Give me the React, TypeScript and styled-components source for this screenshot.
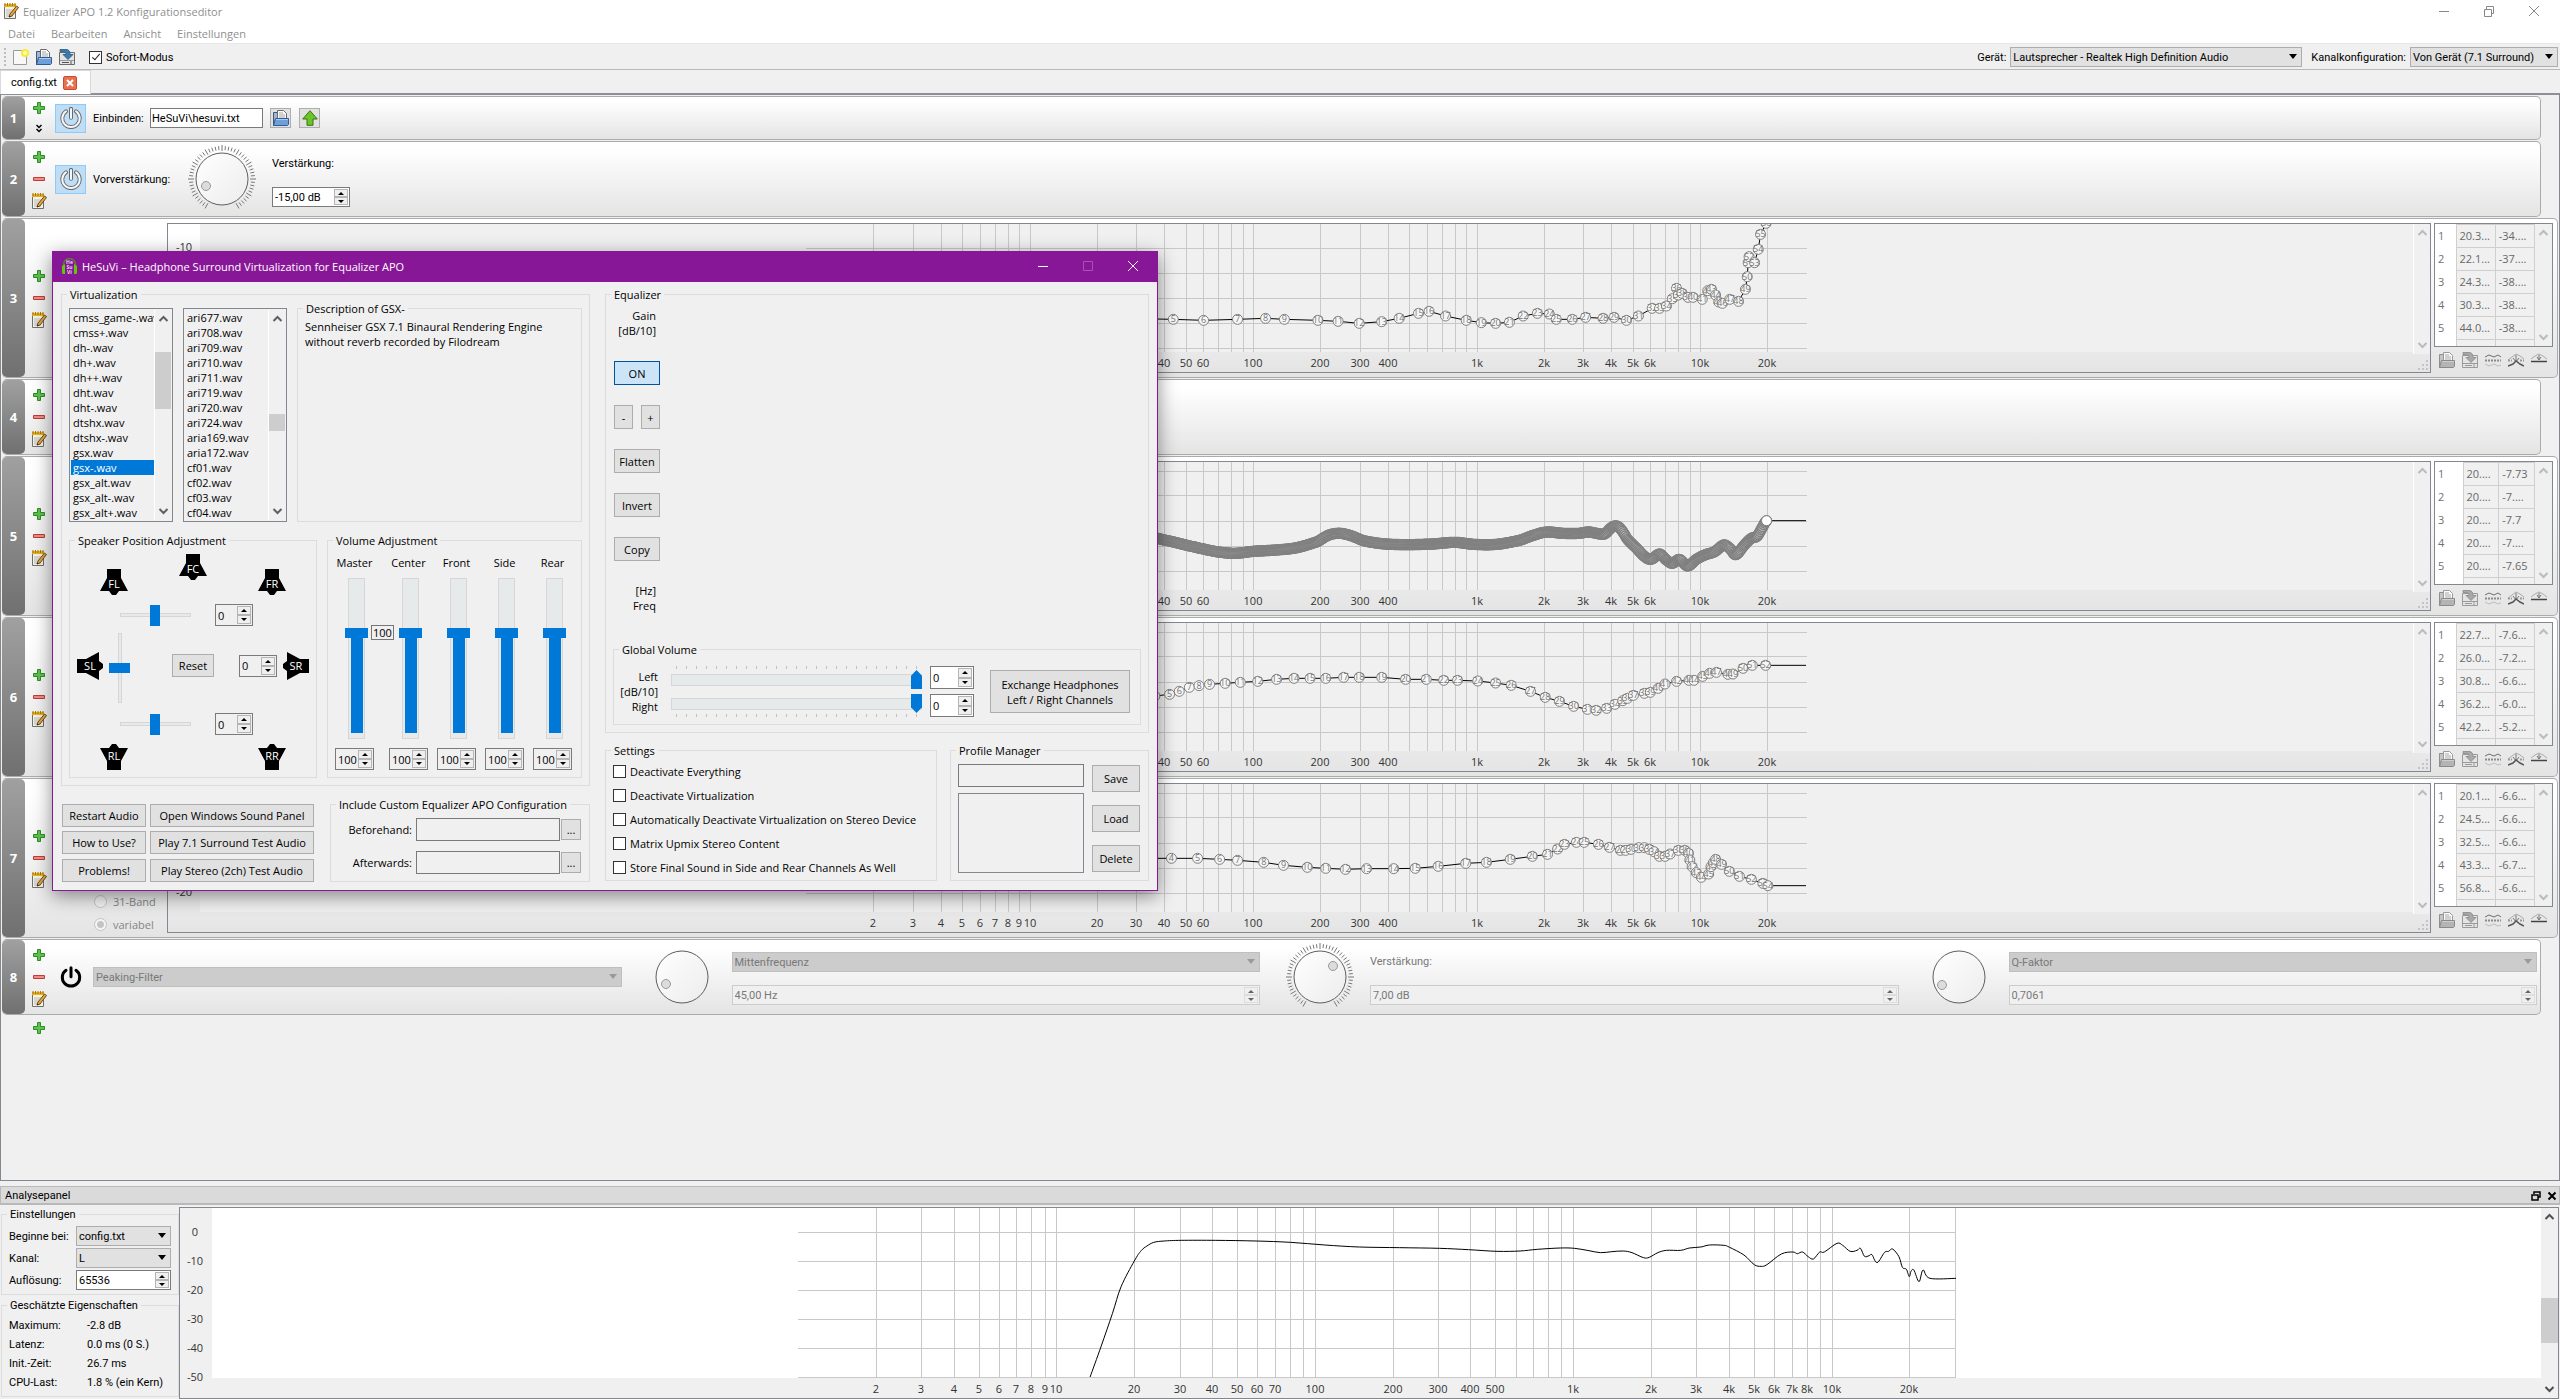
import React from 'react';
import styled, { createGlobalStyle, css } from 'styled-components';

const Global = createGlobalStyle`
  *, *::before, *::after { box-sizing: border-box; }
  body { margin: 0; background: #f0f0f0; overflow: hidden; }
  body, input, select, button {
    font-family: Roboto, "Open Sans", sans-serif;
    font-size: 11px;
    line-height: 15px;
    color: #000;
  }
  ul { list-style: none; margin: 0; padding: 0; }
  svg { display: block; flex: none; }
`;

const axisFont = '"Open Sans", "Noto Sans", sans-serif';

const humanist = css`
  &, button, input {
    font-family: "Open Sans", "Noto Sans", sans-serif;
  }
`;

/* ---------- shared controls ---------- */

const Button = styled.button<{ $w?: number; $h?: number; $on?: boolean }>`
  width: ${p => (p.$w ? `${p.$w}px` : 'auto')};
  height: ${p => p.$h ?? 24}px;
  padding: 0;
  flex: none;
  display: inline-flex;
  align-items: center;
  justify-content: center;
  text-align: center;
  white-space: pre-line;
  border: 1px solid ${p => (p.$on ? '#005499' : '#adadad')};
  background: ${p => (p.$on ? '#cce4f7' : '#e1e1e1')};
`;

const TextInput = styled.input<{ $w?: number; $h?: number; $white?: boolean }>`
  width: ${p => (p.$w ? `${p.$w}px` : '100%')};
  height: ${p => p.$h ?? 20}px;
  padding: 0 1px;
  border: 1px solid #7a7a7a;
  border-radius: 0;
  background: ${p => (p.$white ? '#fff' : '#f0f0f0')};
  outline: none;
`;

const SelectBox = styled.span<{ $w?: number; $off?: boolean }>`
  position: relative;
  display: block;
  width: ${p => (p.$w ? `${p.$w}px` : '100%')};
  height: 20px;
  select {
    appearance: none;
    width: 100%;
    height: 20px;
    padding: 0 16px 0 2px;
    border: 1px solid ${p => (p.$off ? '#bfbfbf' : '#adadad')};
    border-radius: 0;
    background: ${p => (p.$off ? '#ccc' : '#e1e1e1')};
    color: ${p => (p.$off ? '#787878' : '#000')};
    opacity: 1;
  }
  &::after {
    content: '';
    position: absolute;
    right: 5px;
    top: 7px;
    border: 4px solid transparent;
    border-top: 5px solid ${p => (p.$off ? '#9a9a9a' : '#000')};
    border-bottom: 0;
    pointer-events: none;
  }
`;

function Select({ value, w, off, label }: { value: string; w?: number; off?: boolean; label: string }) {
  return (
    <SelectBox $w={w} $off={off}>
      <select aria-label={label} disabled={off} defaultValue={value}>
        <option>{value}</option>
      </select>
    </SelectBox>
  );
}

const SpinBox = styled.span<{ $w?: number; $h: number; $off?: boolean; $white?: boolean }>`
  display: flex;
  flex: 0 1 auto;
  min-width: 0;
  width: ${p => (p.$w ? `${p.$w}px` : '100%')};
  height: ${p => p.$h}px;
  padding: 1px;
  border: 1px solid ${p => (p.$off ? '#ccc' : '#7a7a7a')};
  background: ${p => (p.$white ? '#fff' : '#f0f0f0')};
  input {
    flex: 1;
    min-width: 0;
    width: 0;
    border: 0;
    padding: 0 0 0 1px;
    background: transparent;
    outline: none;
    color: ${p => (p.$off ? '#787878' : '#000')};
  }
`;

const SpinArrows = styled.span`
  display: flex;
  flex-direction: column;
  width: 14px;
  flex: none;
`;

const SpinArrow = styled.button<{ $off?: boolean; $down?: boolean }>`
  flex: 1;
  min-height: 0;
  padding: 0;
  border: 1px solid ${p => (p.$off ? '#ddd' : '#b5b5b5')};
  background: #efefef;
  display: flex;
  align-items: center;
  justify-content: center;
  &::after {
    content: '';
    border: 3px solid transparent;
    ${p =>
      p.$down
        ? css`border-top-color: ${p.$off ? '#666' : '#000'}; border-bottom: 0;`
        : css`border-bottom-color: ${p.$off ? '#666' : '#000'}; border-top: 0;`}
  }
`;

function Spin(p: { value: string; label: string; w?: number; h?: number; off?: boolean; white?: boolean }) {
  return (
    <SpinBox $w={p.w} $h={p.h ?? 20} $off={p.off} $white={p.white}>
      <input aria-label={p.label} defaultValue={p.value} disabled={p.off} />
      <SpinArrows>
        <SpinArrow $off={p.off} disabled={p.off} aria-label={`${p.label} +`} />
        <SpinArrow $off={p.off} disabled={p.off} $down aria-label={`${p.label} -`} />
      </SpinArrows>
    </SpinBox>
  );
}

const Tick = styled.label<{ $h?: number }>`
  display: flex;
  align-items: center;
  gap: 4px;
  height: ${p => p.$h ?? 24}px;
  white-space: nowrap;
  input {
    appearance: none;
    flex: none;
    width: 13px;
    height: 13px;
    margin: 0;
    border: 1px solid #333;
    background: #fff;
  }
  input:checked::after {
    content: '';
    display: block;
    width: 4px;
    height: 8px;
    margin: 0 0 0 4px;
    border: solid #222;
    border-width: 0 1px 1px 0;
    transform: rotate(40deg);
  }
`;

const Group = styled.fieldset<{ $top?: number; $w?: number; $bottom?: number }>`
  margin: 0;
  min-width: 0;
  padding: ${p => p.$top ?? 0}px 7px ${p => p.$bottom ?? 7}px;
  border: 1px solid #dcdcdc;
  ${p => p.$w && css`width: ${p.$w}px; flex: none;`}
  > legend {
    margin-left: -2px;
    padding: 0 3px;
    height: 15px;
    white-space: nowrap;
  }
`;

const Bar = styled.div<{ $edge?: boolean }>`
  width: 17px;
  flex: none;
  display: flex;
  flex-direction: column;
  align-items: center;
  background: #f0f0f0;
  border-left: ${p => (p.$edge ? '1px solid #fff' : '0')};
`;
const BarTrack = styled.div<{ $skip: number }>`
  flex: 1;
  width: 100%;
  padding-top: ${p => p.$skip}px;
`;
const BarThumb = styled.div<{ $h: number }>`
  height: ${p => p.$h}px;
  background: #cdcdcd;
`;

function Chevron({ up, color }: { up?: boolean; color: string }) {
  return (
    <svg width="15" height="17" viewBox="0 0 15 17" fill="none" stroke={color} strokeWidth="2">
      <path d={up ? 'M3.500 11l4-4 4 4' : 'M3.500 6l4 4 4-4'} />
    </svg>
  );
}

function ScrollBar({ skip = 0, thumb = 0, color = '#bbb', edge }: { skip?: number; thumb?: number; color?: string; edge?: boolean }) {
  return (
    <Bar $edge={edge}>
      <Chevron up color={color} />
      <BarTrack $skip={skip}>{thumb > 0 && <BarThumb $h={thumb} />}</BarTrack>
      <Chevron color={color} />
    </Bar>
  );
}

/* ---------- icons ---------- */

const NotepadIcon = () => (
  <svg width="16" height="16" viewBox="0 0 16 16">
    <path d="M1.500 2.500h11v13h-11z" fill="#f4f1e6" stroke="#6f6f6f" />
    <path d="M3 7h7M3 9h6M3 11h5M3 13h7" stroke="#b9b9b9" />
    <path d="M1 1h12v3H1z" fill="#e3b21c" />
    <path d="M2 0v3M4.500 0v3M7 0v3M9.500 0v3M12 0v3" stroke="#a87708" />
    <path d="M13.500 3l2 1.500L9 13l-3 1 1-3z" fill="#e0a640" stroke="#6d4a17" />
    <path d="M6.300 12.700L6 14.300l1.500-.6z" fill="#222" />
  </svg>
);
const PlusIcon = () => (
  <svg width="12" height="12" viewBox="0 0 12 12">
    <path d="M4.500.500h3v4h4v3h-4v4h-3v-4h-4v-3h4z" fill="#5cc34c" stroke="#2f8a27" />
  </svg>
);
const MinusIcon = () => (
  <svg width="12" height="4" viewBox="0 0 12 4">
    <path d="M.500.500h11v3H.500z" fill="#ee8c85" stroke="#c23b35" />
  </svg>
);
const ExpandIcon = () => (
  <svg width="6" height="9" viewBox="0 0 6 9" fill="none" stroke="#000" strokeWidth="1.500">
    <path d="M.500 1l2.500 2.500L5.500 1M.500 5L3 7.500 5.500 5" />
  </svg>
);
const NewIcon = () => (
  <svg width="16" height="16" viewBox="0 0 16 16">
    <path d="M.500 1.500h13v14H.500z" fill="#f8f8f6" stroke="#9a9a9a" />
    <circle cx="12" cy="4" r="4" fill="#f7ea3c" />
    <circle cx="12" cy="4" r="2" fill="#fffbb0" />
  </svg>
);
const OpenIcon = ({ gray }: { gray?: boolean }) => (
  <svg width="16" height="16" viewBox="0 0 16 16">
    <path d="M.500 2.500h4l1 1v12h-5z" fill={gray ? '#c4c4c4' : '#9db7d6'} stroke={gray ? '#8f8f8f' : '#44556b'} />
    <path d="M4.500.500h6l3 3v7h-9z" fill="#fafafa" stroke={gray ? '#9a9a9a' : '#6b6b6b'} />
    <path d="M6 3h4M6 5h6M6 7h6" stroke="#a8a8a8" />
    <path d="M2.500 8.500h13v6l-1 1H.500z" fill={gray ? '#b4b4b4' : '#6f9fd8'} stroke={gray ? '#8a8a8a' : '#2f5c96'} />
    <path d="M3 9.500h12" stroke={gray ? '#cfcfcf' : '#a9c9ee'} />
  </svg>
);
const SaveIcon = ({ gray }: { gray?: boolean }) => (
  <svg width="16" height="16" viewBox="0 0 16 16">
    <path d="M.500 3.500h15v12H.500z" fill="#e4e4e4" stroke={gray ? '#9a9a9a' : '#6c6c6c'} />
    <path d="M1 11.500h14" stroke="#9a9a9a" />
    <path d="M3 13.500h7M12 12v3" stroke={gray ? '#999' : '#555'} />
    <path d="M1 .500h6c3 0 4 2 4 5h3l-5 5-5-5h3c0-2-1-3-3-3H1z" fill={gray ? '#a9a9a9' : '#3d7cae'} stroke={gray ? '#888' : '#235883'} strokeWidth=".800" />
  </svg>
);
const UpArrowIcon = () => (
  <svg width="16" height="16" viewBox="0 0 16 16">
    <path d="M8 .700L15.300 9H11v6.300H5V9H.700z" fill="#6cc42a" stroke="#37750f" />
  </svg>
);
const PowerIcon = ({ dark }: { dark?: boolean }) => (
  <svg width="22" height="22" viewBox="0 0 22 22" fill="none" strokeLinecap="round">
    <g stroke={dark ? '#000' : '#6a6a6a'} strokeWidth={dark ? 3 : 4}>
      <path d="M11 1.800v9M6 4.300a8.700 8.700 0 1 0 10 0" />
    </g>
    {!dark && (
      <g stroke="#f4f8fc" strokeWidth="2">
        <path d="M11 2v9M6 4.300a8.700 8.700 0 1 0 10 0" />
      </g>
    )}
  </svg>
);
const CurveIcon = ({ kind }: { kind: number }) => (
  <svg width="16" height="14" viewBox="0 0 16 14" fill="none">
    {kind === 0 && (
      <>
        <path d="M0 4l4-2 5 2 4-2 3 2" stroke="#6e6e6e" />
        <path d="M0 7.500h16" stroke="#8b8b8b" strokeDasharray="2 1" strokeWidth="2" />
        <path d="M0 11l4 2 5-2 4 2 3-1" stroke="#bdbdbd" />
      </>
    )}
    {kind === 1 && (
      <>
        <path d="M0 7l4-3 4-3 4 2 4 3" stroke="#aaa" />
        <path d="M8 2v6M5 5l3 4 3-4" stroke="#777" />
        <path d="M0 7.500h4M12 7.500h4" stroke="#999" strokeDasharray="2 1" strokeWidth="2" />
        <path d="M0 13l5-2 3-3 4 3 4 2" stroke="#555" strokeWidth="1.500" />
      </>
    )}
    {kind === 2 && (
      <>
        <path d="M0 6l4-3 4-2 4 2 4 3" stroke="#aaa" />
        <path d="M8 2v5M6 4l2 3 2-3" stroke="#777" />
        <path d="M0 8.500h16" stroke="#444" strokeWidth="1.500" />
      </>
    )}
  </svg>
);
const HeadphoneIcon = () => (
  <svg width="15" height="17" viewBox="0 0 15 17" fontFamily={axisFont} fontWeight="700" fontSize="5" fill="#e8d6ec" textAnchor="middle">
    <path d="M1.500 9V6.500a6 6 0 0 1 12 0V9" fill="none" stroke="#5c7a3c" strokeWidth="1.500" />
    <path d="M3 6v10H1.500A1.500 1.500 0 0 1 0 14.500V8zM12 6v10h1.500a1.500 1.500 0 0 0 1.500-1.500V8z" fill="#62c80a" />
    <text x="7.500" y="6">He</text>
    <text x="7.500" y="11">Su</text>
    <text x="7.500" y="16">Vi</text>
  </svg>
);

/* ---------- dial ---------- */

function Dial({ ticks, dx, dy }: { ticks?: boolean; dx: number; dy: number }) {
  const marks = Array.from({ length: 51 }, (_, i) => {
    const a = ((-150 + i * 6) * Math.PI) / 180;
    const major = i % 5 === 0;
    const r1 = major ? 28 : 29;
    const r2 = major ? 34 : 33;
    return <line key={i} x1={35 + r1 * Math.sin(a)} y1={35 - r1 * Math.cos(a)} x2={35 + r2 * Math.sin(a)} y2={35 - r2 * Math.cos(a)} />;
  });
  return (
    <svg width="70" height="70" viewBox="0 0 70 70">
      <defs>
        <linearGradient id="dialFace" x1="0" y1="0" x2="1" y2="1">
          <stop offset="0" stopColor="#fff" />
          <stop offset="1" stopColor="#ececec" />
        </linearGradient>
      </defs>
      {ticks && <g stroke="#777" strokeWidth="1">{marks}</g>}
      <circle cx="35" cy="35" r="26" fill="url(#dialFace)" stroke="#5e5e5e" />
      <circle cx={35 + dx} cy={35 + dy} r="4.500" fill="#dcdcdc" stroke="#999" />
    </svg>
  );
}

/* ---------- window chrome ---------- */

const Page = styled.main`
  min-height: 100vh;
  display: flex;
  flex-direction: column;
  position: relative;
`;
const TitleBar = styled.header`
  ${humanist}
  height: 24px;
  background: #fff;
  display: flex;
  align-items: center;
  padding: 0 20px 2px 3px;
  gap: 4px;
  h1 {
    margin: 0;
    font-size: 11px;
    font-weight: 400;
    color: #8f8f8f;
  }
`;
const Spacer = styled.span`
  flex: 1;
`;
const ChromeButtons = styled.div<{ $gap: number }>`
  display: flex;
  align-items: center;
  gap: ${p => p.$gap}px;
  button {
    padding: 0;
    border: 0;
    background: none;
  }
`;
const MenuBar = styled.nav`
  ${humanist}
  height: 19px;
  background: #fff;
  display: flex;
  align-items: center;
  gap: 16px;
  padding: 0 8px;
  button {
    padding: 0;
    border: 0;
    background: none;
    color: #8f8f8f;
  }
`;
const ToolBar = styled.div`
  height: 27px;
  border-top: 1px solid #e8e8e8;
  border-bottom: 1px solid #b9b9b9;
  display: flex;
  align-items: center;
  padding: 1px 2px 0 4px;
`;
const Grip = styled.span`
  width: 2px;
  height: 19px;
  margin-right: 7px;
  background: repeating-linear-gradient(#bdbdbd 0 2px, transparent 2px 4px);
`;
const Tools = styled.div`
  display: flex;
  gap: 7px;
  margin-right: 14px;
  button {
    padding: 0;
    border: 0;
    background: none;
  }
`;
const Labeled = styled.label`
  display: flex;
  align-items: center;
  gap: 4px;
  white-space: nowrap;
  margin-left: 9px;
`;
const TabBar = styled.div`
  height: 23px;
  display: flex;
`;
const Tab = styled.div`
  height: 24px;
  width: 91px;
  position: relative;
  border: 1px solid #d9d9d9;
  border-bottom: 0;
  background: #fff;
  display: flex;
  align-items: center;
  padding-left: 10px;
  gap: 6px;
  button {
    width: 14px;
    height: 14px;
    padding: 2px;
    border: 1px solid #c8492c;
    border-radius: 2px;
    background: #e8714f;
  }
`;
const Frame = styled.section`
  flex: 1;
  display: flex;
  flex-direction: column;
  gap: 1px;
  padding: 1px 1px 0;
  border: 1px solid #828790;
  border-top: 2px solid #8d9096;
`;

/* ---------- filter rows ---------- */

const Row = styled.article<{ $h: number; $wide?: boolean }>`
  height: ${p => p.$h}px;
  margin-right: ${p => (p.$wide ? 0 : 17)}px;
  border: 1px solid #ababab;
  border-left: 0;
  border-radius: 5px;
  background: linear-gradient(#fff 10%, #e4e4e4);
  display: flex;
`;
const RowNumber = styled.div`
  ${humanist}
  width: 23px;
  flex: none;
  border-radius: 5px;
  background: linear-gradient(#a0a0a0, #707070);
  color: #fff;
  font-size: 13px;
  font-weight: 700;
  display: flex;
  align-items: center;
  justify-content: center;
`;
const RowTools = styled.div`
  width: 28px;
  flex: none;
  display: flex;
  flex-direction: column;
  align-items: center;
  justify-content: center;
  button {
    width: 20px;
    height: 22px;
    padding: 0;
    border: 0;
    background: none;
    display: flex;
    align-items: center;
    justify-content: center;
  }
`;
const RowBody = styled.div`
  flex: 1;
  min-width: 0;
  display: flex;
  align-items: center;
  padding-left: 2px;
`;
const PowerButton = styled.button<{ $off?: boolean }>`
  width: 31px;
  height: 29px;
  padding: 0;
  flex: none;
  margin-right: 7px;
  display: flex;
  align-items: center;
  justify-content: center;
  border: 1px solid ${p => (p.$off ? 'transparent' : '#90c8f6')};
  background: ${p => (p.$off ? 'none' : '#bfddf5')};
`;
const FieldLabel = styled.label<{ $w: number }>`
  width: ${p => p.$w}px;
  flex: none;
`;
const IncludeTools = styled.div`
  display: flex;
  gap: 8px;
  margin-left: 7px;
`;
const DialSlot = styled.div`
  width: 100px;
  flex: none;
  display: flex;
  justify-content: center;
`;
const PeakDialSlot = styled(DialSlot)`
  margin-left: 10px;
`;
const Stack = styled.div<{ $off?: boolean; $w?: number; $grow?: boolean; $single?: boolean }>`
  ${p => (p.$grow ? css`flex: 1; min-width: 0;` : css`width: ${p.$w}px;`)}
  display: flex;
  flex-direction: column;
  gap: 13px;
  padding-top: ${p => (p.$single ? 0 : 3)}px;
  color: ${p => (p.$off ? '#787878' : '#000')};
  > b {
    height: 20px;
    font-weight: 400;
    line-height: 20px;
  }
`;
const PeakBody = styled(RowBody)`
  padding-right: 3px;
`;

function RowShell({ n, h, wide, children }: { n: number; h: number; wide?: boolean; children?: React.ReactNode }) {
  return (
    <Row $h={h} $wide={wide}>
      <RowNumber>{n}</RowNumber>
      <RowTools>
        <button aria-label="Hinzufügen"><PlusIcon /></button>
        {n === 1 ? (
          <button aria-label="Aufklappen"><ExpandIcon /></button>
        ) : (
          <>
            <button aria-label="Entfernen"><MinusIcon /></button>
            <button aria-label="Als Text bearbeiten"><NotepadIcon /></button>
          </>
        )}
      </RowTools>
      {children}
    </Row>
  );
}

/* ---------- graphs ---------- */

type Pt = [number, number];

const GraphFrame = styled.div`
  flex: 1;
  min-width: 0;
  height: 150px;
  border: 1px solid #828790;
  display: flex;
`;
const PlotArea = styled.div<{ $h: number; $bg: string }>`
  flex: 1;
  min-width: 0;
  display: flex;
  justify-content: center;
  overflow: hidden;
  background: linear-gradient(${p => p.$bg}, ${p => p.$bg}) no-repeat 0 0 / 100% ${p => p.$h}px;
`;
const GraphEdge = styled.div`
  display: flex;
  flex-direction: column;
  justify-content: space-between;
  align-items: flex-end;
  > div { height: 130px; }
`;
const GraphBody = styled(RowBody)`
  padding: 0 4px 0 0;
  gap: 3px;
`;
const Modes = styled.div`
  ${humanist}
  width: 111px;
  align-self: stretch;
  flex: none;
  display: flex;
  flex-direction: column;
  justify-content: flex-end;
  padding: 0 0 1px 41px;
  label {
    height: 23px;
    display: flex;
    align-items: center;
    gap: 6px;
    color: #858585;
  }
  input {
    appearance: none;
    width: 13px;
    height: 13px;
    margin: 0;
    border: 1px solid #c4c4c4;
    border-radius: 50%;
    background: #f4f4f4;
  }
  input:checked { background: radial-gradient(circle, #c4c4c4 3px, #f4f4f4 4px); }
`;
const SidePanel = styled.div`
  width: 119px;
  flex: none;
  height: 150px;
`;
const TableFrame = styled.div`
  height: 124px;
  border: 1px solid #828790;
  display: flex;
  overflow: hidden;
`;
const PointTable = styled.table<{ $head: number }>`
  ${humanist}
  flex: 1;
  width: 100px;
  height: 138px;
  font-size: 11px;
  line-height: 15px;
  table-layout: fixed;
  border-collapse: collapse;
  color: #686868;
  th {
    width: ${p => p.$head}px;
    background: #fff;
    font-weight: 400;
    text-align: left;
    color: #707070;
  }
  td { border: 1px solid #cfcfcf; background: #f0f0f0; }
  th, td {
    height: 23px;
    padding: 0 0 2px 3px;
    white-space: nowrap;
    overflow: hidden;
  }
`;
const SideTools = styled.div`
  display: flex;
  gap: 7px;
  padding: 5px 0 0 5px;
  align-items: center;
  button { padding: 0; border: 0; background: none; width: 16px; }
`;

function ResizeGrip() {
  return (
    <svg width="12" height="12" viewBox="0 0 12 12" fill="#c4c4c4">
      {[[8, 0], [8, 4], [8, 8], [4, 4], [4, 8], [0, 8]].map(([x, y]) => (
        <rect key={`${x}-${y}`} x={x} y={y} width="2" height="2" />
      ))}
    </svg>
  );
}

const freqName = (f: number) => (f >= 1000 ? `${f / 1000}k` : `${f}`);

function Grid({ decade, bottom, lines, labels, base, end }: { decade: number; bottom: number; lines: number[]; labels: number[]; base: number; end?: boolean }) {
  const xs: number[] = [];
  for (let d = 1; d <= 10000; d *= 10) for (let k = 1; k < 10; k++) if (d * k > 1 && d * k < 30000) xs.push(d * k);
  if (end) xs.push(30000);
  const x = (f: number) => Math.round(Math.log10(f) * decade);
  return (
    <>
      <g stroke="#c8c8c8" strokeWidth="1" shapeRendering="crispEdges">
        {xs.map(f => <line key={f} x1={x(f) + 0.5} x2={x(f) + 0.5} y1="0" y2={bottom} />)}
        {lines.map(y => <line key={y} x1="0" x2={x(30000)} y1={y - 0.5} y2={y - 0.5} />)}
      </g>
      <g fontFamily={axisFont} fontSize="11" fill="#333" textAnchor="middle">
        {labels.map(f => <text key={f} x={x(f)} y={base}>{freqName(f)}</text>)}
      </g>
    </>
  );
}

const shortLabels = [2, 3, 4, 5, 6, 7, 8, 9, 10, 20, 30, 40, 50, 60, 100, 200, 300, 400, 1000, 2000, 3000, 4000, 5000, 6000, 10000, 20000];
const longLabels = [...shortLabels, 70, 500, 7000, 8000];

const traceX = (u: number) => 314 + u / 2.1778;

interface Trace {
  first: number;
  top: number;
  lead: Pt;
  points: Pt[];
  tail?: boolean;
}

const trace3: Trace = {
  first: 5, top: -24, lead: [-200, 350],
  points: [[116, 358], [182, 361], [256, 358], [317, 355], [358, 358], [431, 361], [475, 364], [521, 370], [570, 365], [608, 355], [650, 340], [673, 334], [709, 348], [754, 361], [787, 368], [818, 370], [848, 367], [878, 348], [909, 340], [935, 342], [950, 358], [985, 358], [1014, 352], [1052, 355], [1076, 352], [1103, 361], [1129, 348], [1159, 325], [1175, 325], [1190, 318], [1203, 296], [1212, 265], [1216, 285], [1224, 280], [1237, 292], [1248, 292], [1268, 298], [1280, 272], [1288, 268], [1297, 285], [1304, 306], [1312, 310], [1328, 298], [1347, 304], [1362, 268], [1366, 230], [1368, 188], [1370, 170], [1382, 188], [1390, 148], [1395, 103], [1407, 70]],
};
const trace5: Trace = {
  first: 0, top: -262, lead: [40, 1000], tail: true,
  points: [[83, 1015], [110, 1024], [143, 1035], [182, 1047], [215, 1056], [250, 1060], [290, 1054], [340, 1050], [385, 1043], [430, 1025], [455, 1005], [480, 1000], [505, 1008], [530, 1022], [570, 1031], [620, 1034], [680, 1032], [730, 1027], [770, 1033], [820, 1033], [870, 1021], [905, 1004], [930, 996], [965, 1000], [1000, 1000], [1020, 996], [1055, 1002], [1070, 983], [1082, 978], [1092, 990], [1105, 1018], [1125, 1045], [1145, 1072], [1158, 1077], [1175, 1062], [1190, 1080], [1203, 1090], [1218, 1078], [1236, 1098], [1255, 1078], [1275, 1064], [1295, 1055], [1315, 1035], [1328, 1045], [1341, 1064], [1360, 1035], [1375, 1015], [1388, 1008], [1400, 980], [1408, 962]],
};
const trace6: Trace = {
  first: 4, top: -23, lead: [40, 300], tail: true,
  points: [[76, 288], [108, 283], [129, 274], [151, 262], [172, 257], [195, 253], [229, 250], [262, 247], [300, 244], [341, 238], [379, 235], [414, 235], [448, 235], [487, 232], [521, 232], [570, 232], [622, 238], [667, 238], [705, 241], [735, 241], [779, 243], [818, 249], [852, 256], [894, 274], [926, 292], [957, 304], [988, 319], [1018, 328], [1037, 331], [1060, 325], [1078, 313], [1095, 302], [1105, 295], [1118, 286], [1142, 280], [1155, 277], [1172, 265], [1187, 252], [1212, 244], [1239, 241], [1250, 241], [1269, 229], [1284, 220], [1299, 217], [1324, 223], [1335, 222], [1357, 205], [1377, 196], [1406, 196]],
};
const trace7: Trace = {
  first: 4, top: -184, lead: [20, 775], tail: true,
  points: [[112, 775], [169, 775], [217, 778], [256, 781], [313, 787], [356, 796], [408, 802], [448, 805], [491, 808], [537, 806], [596, 806], [643, 805], [693, 799], [753, 790], [798, 787], [850, 778], [898, 769], [931, 763], [953, 747], [968, 733], [994, 727], [1011, 727], [1042, 733], [1066, 742], [1090, 751], [1101, 751], [1113, 748], [1130, 743], [1142, 743], [1153, 748], [1163, 755], [1175, 769], [1187, 769], [1198, 762], [1216, 751], [1230, 751], [1238, 760], [1241, 780], [1246, 800], [1255, 818], [1266, 832], [1282, 822], [1287, 800], [1292, 788], [1297, 778], [1310, 793], [1327, 814], [1349, 829], [1375, 838], [1400, 850], [1411, 857]],
};

function smooth(pts: Pt[]) {
  let d = `M${pts[0][0]} ${pts[0][1]}`;
  for (let i = 0; i < pts.length - 1; i++) {
    const p0 = pts[Math.max(0, i - 1)];
    const p1 = pts[i];
    const p2 = pts[i + 1];
    const p3 = pts[Math.min(pts.length - 1, i + 2)];
    d += `C${p1[0] + (p2[0] - p0[0]) / 6} ${p1[1] + (p2[1] - p0[1]) / 6} ${p2[0] - (p3[0] - p1[0]) / 6} ${p2[1] - (p3[1] - p1[1]) / 6} ${p2[0]} ${p2[1]}`;
  }
  return d;
}

function dense(pts: Pt[]): Pt[] {
  const out: Pt[] = [];
  for (let i = 0; i < pts.length - 1; i++) {
    const [p0, p1, p2, p3] = [pts[Math.max(0, i - 1)], pts[i], pts[i + 1], pts[Math.min(pts.length - 1, i + 2)]];
    const n = Math.max(1, Math.round(p2[0] - p1[0]));
    for (let k = 0; k < n; k++) {
      const t = k / n;
      const y = 0.5 * (2 * p1[1] + (p2[1] - p0[1]) * t + (2 * p0[1] - 5 * p1[1] + 4 * p2[1] - p3[1]) * t * t + (3 * p1[1] - p0[1] - 3 * p2[1] + p3[1]) * t * t * t);
      out.push([p1[0] + (p2[0] - p1[0]) * t, y]);
    }
  }
  out.push(pts[pts.length - 1]);
  return out;
}

function Plot({ trace, lines }: { trace: Trace; lines: number[] }) {
  const pts: Pt[] = trace.points.map(([u, v]) => [traceX(u), v / 3 + trace.top]);
  const lead: Pt = [traceX(trace.lead[0]), trace.lead[1] / 3 + trace.top];
  const last = pts[pts.length - 1];
  const line = [lead, ...pts, ...(trace.tail ? [[1000, last[1]] as Pt] : [])];
  const numbered = trace.first > 0;
  const nodes = numbered ? pts : dense([lead, ...pts]);
  return (
    <svg width="1001" height="148" viewBox="0 0 1001 148">
      <Grid decade={223.5} bottom={128} lines={lines} labels={shortLabels} base={143} />
      <polyline points={line.map(p => p.join(',')).join(' ')} fill="none" stroke="#000" />
      <g stroke="#808080" strokeWidth={numbered ? 1 : 1.4} fill={numbered ? '#f6f6f6' : '#c8c8c8'} fontFamily={axisFont} fontSize="9" textAnchor="middle">
        {nodes.map(([x, y], i) => (
          <g key={i}>
            <circle cx={x} cy={y} r="5" />
            {numbered && <text x={x} y={y + 3} stroke="none" fill="#777">{trace.first + i}</text>}
          </g>
        ))}
        {!numbered && <circle cx={last[0]} cy={last[1]} r="5" fill="#fff" strokeWidth="1" />}
      </g>
    </svg>
  );
}

function GraphRow(p: { n: number; trace: Trace; lines: number[]; yLabel?: [string, number]; modes?: boolean; head?: number; rows: [string, string][] }) {
  return (
    <RowShell n={p.n} h={160} wide>
      <GraphBody>
        <Modes>
          {p.modes && (
            <>
              <label><input type="radio" name={`mode${p.n}`} disabled />31-Band</label>
              <label><input type="radio" name={`mode${p.n}`} disabled defaultChecked />variabel</label>
            </>
          )}
        </Modes>
        <GraphFrame>
          <svg width="32" height="148" viewBox="0 0 32 148" fontFamily={axisFont} fontSize="11" fill="#333">
            {p.yLabel && <text x="8" y={p.yLabel[1] + 3}>{p.yLabel[0]}</text>}
          </svg>
          <PlotArea $h={128} $bg="#f0f0f0">
            <Plot trace={p.trace} lines={p.lines} />
          </PlotArea>
          <GraphEdge>
            <ScrollBar edge />
            <ResizeGrip />
          </GraphEdge>
        </GraphFrame>
        <SidePanel>
          <TableFrame>
            <PointTable $head={p.head ?? 21}>
              <tbody>
                {p.rows.map(([a, b], i) => (
                  <tr key={i}><th scope="row">{i + 1}</th><td>{a}</td><td>{b}</td></tr>
                ))}
                <tr><th /><td /><td /></tr>
              </tbody>
            </PointTable>
            <ScrollBar />
          </TableFrame>
          <SideTools>
            <button aria-label="Importieren" disabled><OpenIcon gray /></button>
            <button aria-label="Exportieren" disabled><SaveIcon gray /></button>
            <button aria-label="Invertieren" disabled><CurveIcon kind={0} /></button>
            <button aria-label="Normalisieren" disabled><CurveIcon kind={1} /></button>
            <button aria-label="Zurücksetzen" disabled><CurveIcon kind={2} /></button>
          </SideTools>
        </SidePanel>
      </GraphBody>
    </RowShell>
  );
}

/* ---------- analysis panel ---------- */

const DockTitle = styled.header`
  margin-top: 5px;
  height: 19px;
  border: 1px solid #b9b9b9;
  border-bottom-width: 2px;
  background: #dadada;
  display: flex;
  align-items: center;
  padding: 1px 2px 0 4px;
  h2 { margin: 0; font-size: 11px; font-weight: 400; }
`;
const Dock = styled.section`
  display: flex;
  padding: 2px 1px 0;
`;
const DockSide = styled.div`
  width: 178px;
  flex: none;
  display: flex;
  flex-direction: column;
  gap: 3px;
`;
const DockField = styled.label`
  display: flex;
  align-items: center;
  height: 20px;
  margin-bottom: 2px;
  > span:first-child { width: 67px; flex: none; }
`;
const Facts = styled.dl`
  margin: 0;
  display: grid;
  grid-template-columns: 78px 1fr;
  line-height: 19px;
  dd { margin: 0; white-space: nowrap; }
`;
const AnalysisFrame = styled.div`
  flex: 1;
  min-width: 0;
  border: 1px solid #828790;
  display: flex;
  height: 192px;
`;

const response: Pt[] = [[-19, 561], [0, 470], [20, 370], [35, 290], [58, 213], [70, 182], [80, 168], [92, 157], [110, 153], [140, 151], [200, 151], [270, 153], [330, 157], [390, 165], [450, 171], [520, 173], [590, 175], [640, 179], [690, 184], [730, 183], [760, 178], [800, 174], [825, 175], [850, 182], [870, 188], [890, 185], [910, 183], [925, 188], [945, 203], [955, 202], [970, 188], [985, 181], [1010, 181], [1025, 174], [1045, 171], [1060, 165], [1085, 166], [1095, 172], [1120, 195], [1138, 224], [1150, 229], [1160, 224], [1185, 192], [1205, 186], [1213, 191], [1222, 186], [1232, 200], [1241, 207], [1252, 186], [1260, 186], [1282, 160], [1292, 166], [1305, 184], [1317, 181], [1323, 175], [1330, 199], [1338, 197], [1343, 194], [1352, 218], [1365, 187], [1372, 184], [1379, 177], [1390, 200], [1396, 232], [1403, 238], [1408, 260], [1411, 244], [1416, 240], [1425, 275], [1432, 240], [1444, 265], [1490, 265]];

function Analysis() {
  const pts = response.map(([u, v]) => [303 + u / 1.742, v / 3 - 18] as Pt);
  return (
    <>
      <DockTitle>
        <h2>Analysepanel</h2>
        <Spacer />
        <ChromeButtons $gap={6}>
          <button aria-label="Andocken">
            <svg width="10" height="10" viewBox="0 0 10 10" fill="none" stroke="#000" strokeWidth="1.500"><path d="M3 3V1h6v5H7M1 4h6v5H1z" /></svg>
          </button>
          <button aria-label="Schließen">
            <svg width="10" height="10" viewBox="0 0 10 10" stroke="#000" strokeWidth="2"><path d="M1.500 1.500l7 7M8.500 1.500l-7 7" /></svg>
          </button>
        </ChromeButtons>
      </DockTitle>
      <Dock>
        <DockSide>
          <Group $top={4} $bottom={2}>
            <legend>Einstellungen</legend>
            <DockField><span>Beginne bei:</span><Select label="Beginne bei" value="config.txt" /></DockField>
            <DockField><span>Kanal:</span><Select label="Kanal" value="L" /></DockField>
            <DockField><span>Auflösung:</span><Spin label="Auflösung" value="65536" white /></DockField>
          </Group>
          <Group $top={3} $bottom={4}>
            <legend>Geschätzte Eigenschaften</legend>
            <Facts>
              <dt>Maximum:</dt><dd>-2.8 dB</dd>
              <dt>Latenz:</dt><dd>0.0 ms (0 S.)</dd>
              <dt>Init.-Zeit:</dt><dd>26.7 ms</dd>
              <dt>CPU-Last:</dt><dd>1.8 % (ein Kern)</dd>
            </Facts>
          </Group>
        </DockSide>
        <AnalysisFrame>
          <svg width="32" height="190" viewBox="0 0 32 190" fontFamily={axisFont} fontSize="11" fill="#333" textAnchor="middle">
            {[0, -10, -20, -30, -40, -50].map((v, i) => <text key={v} x="15" y={28 + i * 29}>{v}</text>)}
          </svg>
          <PlotArea $h={170} $bg="#fff">
            <svg width="1158" height="190" viewBox="0 0 1158 190">
              <Grid decade={258.4} bottom={170} lines={[25, 54, 83, 112, 141, 170]} labels={longLabels} base={185} end />
              <path d={smooth(pts)} fill="none" stroke="#000" />
            </svg>
          </PlotArea>
          <ScrollBar skip={73} thumb={45} color="#505050" />
        </AnalysisFrame>
      </Dock>
    </>
  );
}

/* ---------- HeSuVi dialog ---------- */

const Dialog = styled.div`
  ${humanist}
  position: absolute;
  left: 52px;
  top: 251px;
  width: 1106px;
  border: 1px solid #881798;
  background: #f0f0f0;
  box-shadow: 0 5px 18px rgba(0, 0, 0, 0.45);
`;
const DialogTitle = styled.header`
  height: 30px;
  background: #881798;
  color: #fff;
  display: flex;
  align-items: center;
  gap: 5px;
  padding: 0 18px 2px 9px;
  h2 { margin: 0; font-size: 11px; font-weight: 400; }
`;
const DialogBody = styled.div`
  padding: 5px 8px 8px;
  display: flex;
  gap: 15px;
`;
const LeftColumn = styled.div`
  width: 529px;
  flex: none;
  display: flex;
  flex-direction: column;
  gap: 11px;
`;
const RightColumn = styled.div`
  flex: 1;
  min-width: 0;
  display: flex;
  flex-direction: column;
  gap: 10px;
`;
const Split = styled.div<{ $gap: number; $mb?: number }>`
  display: flex;
  gap: ${p => p.$gap}px;
  margin-bottom: ${p => p.$mb ?? 0}px;
  justify-content: space-between;
`;
const ListBox = styled.div`
  width: 104px;
  height: 214px;
  margin-top: 6px;
  padding: 1px;
  flex: none;
  display: flex;
  border: 1px solid #828790;
  ul { flex: 1; min-width: 0; overflow: hidden; }
`;
const Item = styled.li<{ $sel?: boolean }>`
  height: 15px;
  padding-left: 2px;
  white-space: nowrap;
  background: ${p => (p.$sel ? '#0078d7' : 'transparent')};
  color: ${p => (p.$sel ? '#fff' : '#000')};
`;
const DescriptionGroup = styled(Group)`
  margin-top: -1px;
`;
const Para = styled.p`
  margin: 3px 0 0;
  white-space: nowrap;
`;

const rangeBase = css`
  appearance: none;
  margin: 0;
  flex: none;
  outline: none;
  &::-webkit-slider-runnable-track { background: none; border: 0; }
`;
const HRange = styled.input`
  ${rangeBase}
  width: 71px;
  height: 22px;
  background: linear-gradient(#e7eaea, #e7eaea) center / 69px 2px no-repeat, linear-gradient(#d6d6d6, #d6d6d6) center / 71px 4px no-repeat;
  &::-webkit-slider-thumb { appearance: none; width: 10px; height: 21px; background: #0078d7; }
`;
const VRange = styled.input`
  ${rangeBase}
  writing-mode: vertical-lr;
  direction: rtl;
  width: 21px;
  height: 70px;
  background: linear-gradient(#e7eaea, #e7eaea) center / 2px 68px no-repeat, linear-gradient(#d6d6d6, #d6d6d6) center / 4px 70px no-repeat;
  &::-webkit-slider-thumb { appearance: none; width: 21px; height: 10px; background: #0078d7; }
`;
const VolumeRange = styled.input`
  ${rangeBase}
  writing-mode: vertical-lr;
  direction: rtl;
  width: 23px;
  height: 161px;
  margin: 8px 0 9px 4px;
  background:
    linear-gradient(#0078d7, #0078d7) center bottom 6px / 12px 100px no-repeat,
    linear-gradient(#e7eaea, #e7eaea) center / 15px 159px no-repeat,
    linear-gradient(#d6d6d6, #d6d6d6) center / 17px 161px no-repeat;
  &::-webkit-slider-thumb { appearance: none; width: 23px; height: 10px; background: #0078d7; }
`;
const GlobalRange = styled.input<{ $down?: boolean }>`
  ${rangeBase}
  width: 251px;
  height: 19px;
  background: linear-gradient(#e7eaea, #e7eaea) center / 249px 10px no-repeat, linear-gradient(#d6d6d6, #d6d6d6) center / 251px 12px no-repeat;
  &::-webkit-slider-thumb {
    appearance: none;
    width: 11px;
    height: 19px;
    background: #0078d7;
    clip-path: ${p => (p.$down ? 'polygon(0 0, 100% 0, 100% 70%, 50% 100%, 0 70%)' : 'polygon(50% 0, 100% 30%, 100% 100%, 0 100%, 0 30%)')};
  }
`;
const GlobalTicks = styled.div`
  width: 242px;
  height: 3px;
  margin-left: 5px;
  background: repeating-linear-gradient(90deg, #c0c0c0 0 1px, transparent 1px 10px);
`;
const GlobalSliders = styled.div`
  display: flex;
  flex-direction: column;
  margin: 9px 8px 0 13px;
  gap: 5px;
  > div:first-child { margin-bottom: -4px; }
  > div:last-child { margin-top: -4px; }
`;
const SpinColumn = styled.div`
  display: flex;
  flex-direction: column;
  gap: 5px;
  padding-top: 9px;
`;
const SpeakerRow = styled.div<{ $gap?: number; $pl?: number; $mt?: number; $spread?: boolean }>`
  display: flex;
  align-items: ${p => (p.$spread ? 'flex-end' : 'center')};
  justify-content: ${p => (p.$spread ? 'space-between' : 'flex-start')};
  gap: ${p => p.$gap ?? 0}px;
  padding: 0 ${p => (p.$spread ? 23 : 0)}px 0 ${p => (p.$spread ? 23 : p.$pl ?? 0)}px;
  margin-top: ${p => p.$mt ?? 0}px;
`;
const CenterLift = styled.div`
  padding-bottom: 15px;
`;
const MidRow = styled.div`
  display: flex;
  align-items: center;
  height: 71px;
  margin: 4px 0 12px;
  input[type='range'] { margin: 4px 42px 0 6px; }
  button { margin-right: 25px; }
  > svg:last-child { margin-left: 6px; }
  span button { margin: 0; }
`;
const VolumeColumns = styled.div`
  display: flex;
  gap: 9px;
  padding-top: 7px;
  > :first-child { margin-right: 6px; }
`;
const VolumeColumn = styled.label`
  position: relative;
  width: 39px;
  display: flex;
  flex-direction: column;
  align-items: center;
`;
const ValueTip = styled.output`
  position: absolute;
  left: 36px;
  top: 70px;
  height: 15px;
  padding: 0 1px;
  line-height: 13px;
  border: 1px solid #767676;
  background: #f0f0f0;
`;
const ActionGrid = styled.div`
  display: grid;
  grid-template-columns: 84px 164px;
  gap: 4px;
  margin: 7px 0 0 1px;
`;
const PathRow = styled.label<{ $mt?: number }>`
  display: flex;
  align-items: center;
  justify-content: flex-end;
  gap: 1px;
  margin: ${p => p.$mt ?? 0}px 1px 0 0;
  > span { margin-right: 3px; }
`;
const EqColumn = styled.div`
  width: 46px;
  margin: 0 0 31px 1px;
  padding-top: 6px;
  display: flex;
  flex-direction: column;
  gap: 20px;
`;
const EqText = styled.div`
  padding-right: 4px;
  text-align: right;
  white-space: pre-line;
  margin: 0 0 3px;
  &:last-child { margin: 2px 0 -2px; }
`;
const GlobalRow = styled.div`
  display: flex;
  align-items: flex-start;
`;
const GlobalLabels = styled.div`
  width: 37px;
  margin-top: 12px;
  display: flex;
  flex-direction: column;
  align-items: flex-end;
  white-space: nowrap;
`;
const ExchangeSlot = styled.div`
  margin: 13px 0 0 16px;
`;
const ProfileLists = styled.div`
  width: 126px;
  display: flex;
  flex-direction: column;
  gap: 6px;
`;
const ProfileList = styled.div`
  height: 80px;
  border: 1px solid #828790;
`;
const ProfileButtons = styled.div`
  display: flex;
  flex-direction: column;
  gap: 13px;
  padding: 1px 1px 0 0;
`;

const speakerPaths = {
  down: 'M7 0H21V9L28 22H19L16 26H12L9 22H0L7 9Z',
  up: 'M7 26H21V17L28 4H19L16 0H12L9 4H0L7 17Z',
  right: 'M0 7V21H9L22 28V19L26 16V12L22 9V0L9 7Z',
  left: 'M26 7V21H17L4 28V19L0 16V12L4 9V0L17 7Z',
};
function Speaker({ dir, name }: { dir: keyof typeof speakerPaths; name: string }) {
  const side = dir === 'right' || dir === 'left';
  const x = side ? 13 : 14;
  const y = side ? 18 : dir === 'down' ? 19 : 16;
  return (
    <svg width={side ? 26 : 28} height={side ? 28 : 26} fontFamily={axisFont} fontSize="11" textAnchor="middle">
      <path d={speakerPaths[dir]} fill="#000" />
      <text x={x} y={y} fill="#fff">{name}</text>
    </svg>
  );
}

const hrirs = ['cmss_game-.wav', 'cmss+.wav', 'dh-.wav', 'dh+.wav', 'dh++.wav', 'dht.wav', 'dht-.wav', 'dtshx.wav', 'dtshx-.wav', 'gsx.wav', 'gsx-.wav', 'gsx_alt.wav', 'gsx_alt-.wav', 'gsx_alt+.wav'];
const headphones = ['ari677.wav', 'ari708.wav', 'ari709.wav', 'ari710.wav', 'ari711.wav', 'ari719.wav', 'ari720.wav', 'ari724.wav', 'aria169.wav', 'aria172.wav', 'cf01.wav', 'cf02.wav', 'cf03.wav', 'cf04.wav'];
const settings = ['Deactivate Everything', 'Deactivate Virtualization', 'Automatically Deactivate Virtualization on Stereo Device', 'Matrix Upmix Stereo Content', 'Store Final Sound in Side and Rear Channels As Well'];
const actions = ['Restart Audio', 'Open Windows Sound Panel', 'How to Use?', 'Play 7.1 Surround Test Audio', 'Problems!', 'Play Stereo (2ch) Test Audio'];

function FileList({ items, selected, skip, thumb, label }: { items: string[]; selected?: string; skip: number; thumb: number; label: string }) {
  return (
    <ListBox>
      <ul role="listbox" aria-label={label}>
        {items.map(i => <Item key={i} role="option" aria-selected={i === selected} $sel={i === selected}>{i}</Item>)}
      </ul>
      <ScrollBar skip={skip} thumb={thumb} color="#606060" edge />
    </ListBox>
  );
}

function HesuviDialog() {
  return (
    <Dialog role="dialog" aria-label="HeSuVi">
      <DialogTitle>
        <HeadphoneIcon />
        <h2>HeSuVi – Headphone Surround Virtualization for Equalizer APO</h2>
        <Spacer />
        <ChromeButtons $gap={34}>
          <button aria-label="Minimize"><svg width="11" height="11" stroke="#fff"><path d="M0 5.500h10" /></svg></button>
          <button aria-label="Maximize" disabled><svg width="11" height="11" stroke="#a455b0" fill="none"><path d="M.500.500h9v9h-9z" /></svg></button>
          <button aria-label="Close"><svg width="11" height="11" stroke="#fff"><path d="M0 0l10 10M10 0L0 10" /></svg></button>
        </ChromeButtons>
      </DialogTitle>
      <DialogBody>
        <LeftColumn>
          <Group>
            <legend>Virtualization</legend>
            <Split $gap={10} $mb={11}>
              <FileList label="Virtualization" items={hrirs} selected="gsx-.wav" skip={25} thumb={57} />
              <FileList label="Headphones" items={headphones} skip={87} thumb={17} />
              <DescriptionGroup $w={285}>
                <legend>Description of GSX-</legend>
                <Para>Sennheiser GSX 7.1 Binaural Rendering Engine<br />without reverb recorded by Filodream</Para>
              </DescriptionGroup>
            </Split>
            <Split $gap={10}>
              <Group $w={248}>
                <legend>Speaker Position Adjustment</legend>
                <SpeakerRow $spread $mt={6}>
                  <Speaker dir="down" name="FL" />
                  <CenterLift><Speaker dir="down" name="FC" /></CenterLift>
                  <Speaker dir="down" name="FR" />
                </SpeakerRow>
                <SpeakerRow $mt={9} $pl={43} $gap={24}>
                  <HRange type="range" aria-label="Front angle" defaultValue={49} />
                  <Spin label="Front" value="0" w={38} h={22} />
                </SpeakerRow>
                <MidRow>
                  <Speaker dir="right" name="SL" />
                  <VRange type="range" aria-label="Side angle" defaultValue={50} />
                  <Button $w={42} $h={23}>Reset</Button>
                  <Spin label="Side" value="0" w={38} h={22} />
                  <Speaker dir="left" name="SR" />
                </MidRow>
                <SpeakerRow $pl={43} $gap={24}>
                  <HRange type="range" aria-label="Rear angle" defaultValue={49} />
                  <Spin label="Rear" value="0" w={38} h={22} />
                </SpeakerRow>
                <SpeakerRow $spread $mt={9}>
                  <Speaker dir="up" name="RL" />
                  <Speaker dir="up" name="RR" />
                </SpeakerRow>
              </Group>
              <Group $w={255}>
                <legend>Volume Adjustment</legend>
                <VolumeColumns>
                  {['Master', 'Center', 'Front', 'Side', 'Rear'].map((n, i) => (
                    <VolumeColumn key={n}>
                      {n}
                      <VolumeRange type="range" max={150} defaultValue={100} aria-label={n} />
                      <Spin label={`${n} volume`} value="100" w={39} h={22} />
                      {i === 0 && <ValueTip>100</ValueTip>}
                    </VolumeColumn>
                  ))}
                </VolumeColumns>
              </Group>
            </Split>
          </Group>
          <Split $gap={0}>
            <ActionGrid>{actions.map(a => <Button key={a} $h={23}>{a}</Button>)}</ActionGrid>
            <Group $w={260} $top={6}>
              <legend>Include Custom Equalizer APO Configuration</legend>
              <PathRow><span>Beforehand:</span><TextInput $w={144} $h={23} aria-label="Beforehand" /><Button $w={20} $h={21}>...</Button></PathRow>
              <PathRow $mt={10}><span>Afterwards:</span><TextInput $w={144} $h={23} aria-label="Afterwards" /><Button $w={20} $h={21}>...</Button></PathRow>
            </Group>
          </Split>
        </LeftColumn>
        <RightColumn>
          <Group>
            <legend>Equalizer</legend>
            <EqColumn>
              <EqText>{'Gain\n[dB/10]'}</EqText>
              <Button $on>ON</Button>
              <Split $gap={8}><Button $w={19}>-</Button><Button $w={19}>+</Button></Split>
              <Button>Flatten</Button>
              <Button>Invert</Button>
              <Button>Copy</Button>
              <EqText>{'[Hz]\nFreq'}</EqText>
            </EqColumn>
            <Group>
              <legend>Global Volume</legend>
              <GlobalRow>
                <GlobalLabels><span>Left</span><span>[dB/10]</span><span>Right</span></GlobalLabels>
                <GlobalSliders>
                  <GlobalTicks />
                  <GlobalRange type="range" aria-label="Left" defaultValue={100} />
                  <GlobalRange type="range" aria-label="Right" defaultValue={100} $down />
                  <GlobalTicks />
                </GlobalSliders>
                <SpinColumn>
                  <Spin label="Left volume" value="0" w={44} h={23} white />
                  <Spin label="Right volume" value="0" w={44} h={23} white />
                </SpinColumn>
                <ExchangeSlot><Button $w={140} $h={43}>{'Exchange Headphones\nLeft / Right Channels'}</Button></ExchangeSlot>
              </GlobalRow>
            </Group>
          </Group>
          <Split $gap={13}>
            <Group $w={332} $top={1} $bottom={1}>
              <legend>Settings</legend>
              {settings.map(s => <Tick key={s}><input type="checkbox" />{s}</Tick>)}
            </Group>
            <Group $w={199} $top={6}>
              <legend>Profile Manager</legend>
              <Split $gap={8}>
                <ProfileLists>
                  <TextInput $h={23} aria-label="Profile name" />
                  <ProfileList role="listbox" aria-label="Profiles" />
                </ProfileLists>
                <ProfileButtons>
                  <Button $w={48} $h={27}>Save</Button>
                  <Button $w={48} $h={27}>Load</Button>
                  <Button $w={48} $h={27}>Delete</Button>
                </ProfileButtons>
              </Split>
            </Group>
          </Split>
        </RightColumn>
      </DialogBody>
    </Dialog>
  );
}

/* ---------- page ---------- */

const AddRow = styled.button`
  width: 20px;
  height: 18px;
  margin: 0 0 0 27px;
  padding: 0;
  border: 0;
  background: none;
  display: flex;
  align-items: flex-end;
  justify-content: center;
`;

const gridLow = [10, 34, 60, 85, 110];

export default function App() {
  return (
    <Page>
      <Global />
      <TitleBar>
        <NotepadIcon />
        <h1>Equalizer APO 1.2 Konfigurationseditor</h1>
        <Spacer />
        <ChromeButtons $gap={34}>
          <button aria-label="Minimieren"><svg width="11" height="11" stroke="#888"><path d="M0 5.500h10" /></svg></button>
          <button aria-label="Wiederherstellen"><svg width="11" height="11" stroke="#888" fill="none"><path d="M.500 3.500h7v7h-7zM2.500 3V.500h7v7H8" /></svg></button>
          <button aria-label="Schließen"><svg width="11" height="11" stroke="#888"><path d="M0 0l10 10M10 0L0 10" /></svg></button>
        </ChromeButtons>
      </TitleBar>
      <MenuBar>
        <button>Datei</button>
        <button>Bearbeiten</button>
        <button>Ansicht</button>
        <button>Einstellungen</button>
      </MenuBar>
      <ToolBar>
        <Grip />
        <Tools>
          <button aria-label="Neu"><NewIcon /></button>
          <button aria-label="Öffnen"><OpenIcon /></button>
          <button aria-label="Speichern"><SaveIcon /></button>
        </Tools>
        <Tick><input type="checkbox" defaultChecked />Sofort-Modus</Tick>
        <Spacer />
        <Labeled>Gerät:<Select w={292} label="Gerät" value="Lautsprecher - Realtek High Definition Audio" /></Labeled>
        <Labeled>Kanalkonfiguration:<Select w={148} label="Kanalkonfiguration" value="Von Gerät (7.1 Surround)" /></Labeled>
      </ToolBar>
      <TabBar>
        <Tab>
          config.txt
          <button aria-label="Tab schließen"><svg width="8" height="8" stroke="#fff" strokeWidth="2"><path d="M1 1l6 6M7 1L1 7" /></svg></button>
        </Tab>
      </TabBar>
      <Frame>
        <RowShell n={1} h={44}>
          <RowBody>
            <PowerButton aria-label="Aktiv"><PowerIcon /></PowerButton>
            <FieldLabel $w={57} htmlFor="include">Einbinden:</FieldLabel>
            <TextInput id="include" $w={113} $white defaultValue="HeSuVi\hesuvi.txt" />
            <IncludeTools>
              <Button $w={21} $h={20} aria-label="Datei wählen"><OpenIcon /></Button>
              <Button $w={21} $h={20} aria-label="Datei öffnen"><UpArrowIcon /></Button>
            </IncludeTools>
          </RowBody>
        </RowShell>
        <RowShell n={2} h={76}>
          <RowBody>
            <PowerButton aria-label="Aktiv"><PowerIcon /></PowerButton>
            <FieldLabel $w={79}>Vorverstärkung:</FieldLabel>
            <DialSlot><Dial ticks dx={-16} dy={7} /></DialSlot>
            <Stack $w={78}><b>Verstärkung:</b><Spin label="Verstärkung" value="-15,00 dB" white /></Stack>
          </RowBody>
        </RowShell>
        <GraphRow n={3} trace={trace3} lines={[25, 50, 75, 100, 125]} yLabel={['-10', 24]}
          rows={[['20.3...', '-34....'], ['22.1...', '-37....'], ['24.3...', '-38....'], ['30.3...', '-38....'], ['44.0...', '-38....']]} />
        <RowShell n={4} h={76} />
        <GraphRow n={5} trace={trace5} lines={gridLow} head={28}
          rows={[['20....', '-7.73'], ['20....', '-7....'], ['20....', '-7.7'], ['20....', '-7....'], ['20....', '-7.65']]} />
        <GraphRow n={6} trace={trace6} lines={gridLow}
          rows={[['22.7...', '-7.6...'], ['26.0...', '-7.2...'], ['30.8...', '-6.6...'], ['36.2...', '-6.0...'], ['42.2...', '-5.2...']]} />
        <GraphRow n={7} trace={trace7} lines={gridLow} yLabel={['-20', 109]} modes
          rows={[['20.1...', '-6.6...'], ['24.5...', '-6.6...'], ['32.5...', '-6.6...'], ['43.3...', '-6.7...'], ['56.8...', '-6.6...']]} />
        <RowShell n={8} h={76}>
          <PeakBody>
            <PowerButton $off aria-label="Inaktiv"><PowerIcon dark /></PowerButton>
            <Stack $grow $off $single><Select off label="Filtertyp" value="Peaking-Filter" /></Stack>
            <PeakDialSlot><Dial dx={-16} dy={7} /></PeakDialSlot>
            <Stack $grow $off><Select off label="Frequenzart" value="Mittenfrequenz" /><Spin off label="Frequenz" value="45,00 Hz" /></Stack>
            <PeakDialSlot><Dial ticks dx={13} dy={-11} /></PeakDialSlot>
            <Stack $grow $off><b>Verstärkung:</b><Spin off label="Verstärkung" value="7,00 dB" /></Stack>
            <PeakDialSlot><Dial dx={-17} dy={8} /></PeakDialSlot>
            <Stack $grow $off><Select off label="Güteart" value="Q-Faktor" /><Spin off label="Güte" value="0,7061" /></Stack>
          </PeakBody>
        </RowShell>
        <AddRow aria-label="Hinzufügen"><PlusIcon /></AddRow>
      </Frame>
      <Analysis />
      <HesuviDialog />
    </Page>
  );
}
